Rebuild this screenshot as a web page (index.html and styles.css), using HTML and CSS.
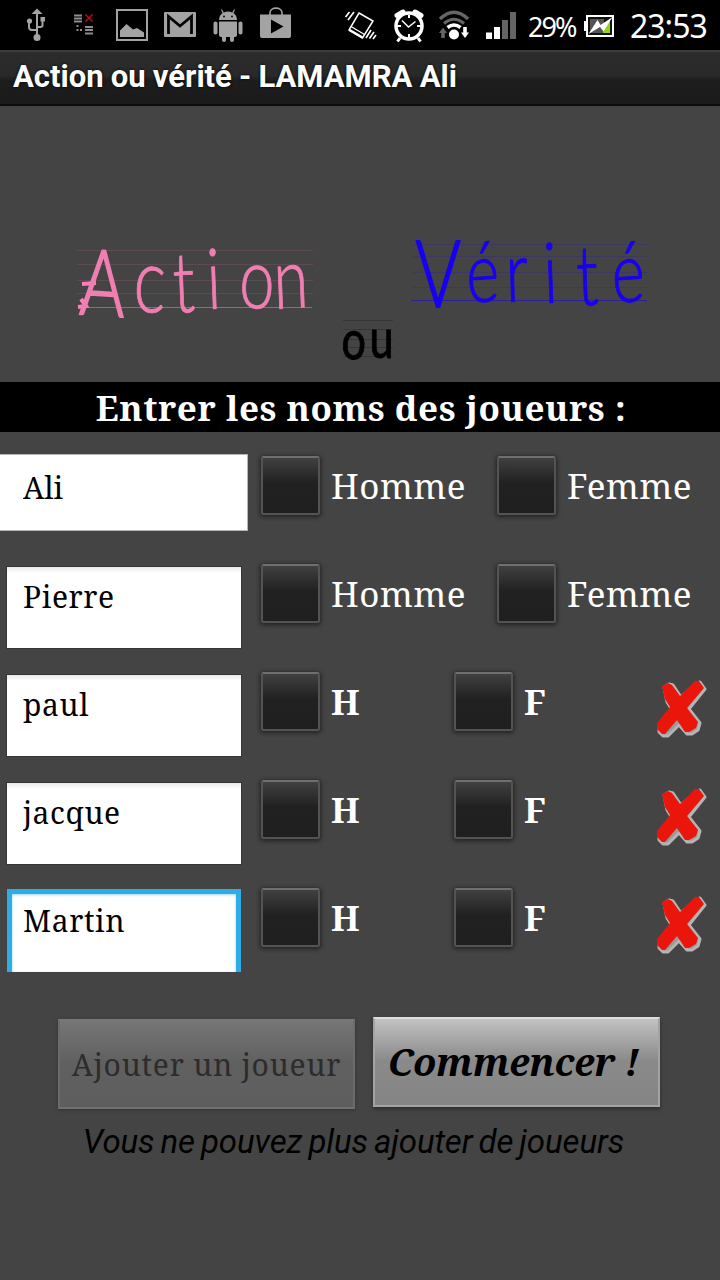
FILE: index.html
```
<!DOCTYPE html>
<html lang="fr">
<head>
  <meta charset="UTF-8" />
  <meta name="viewport" content="width=device-width, initial-scale=1.0"/>
  <title>Action ou vérité</title>
  <link rel="stylesheet" href="styles.css">
</head>
<body>

  <div class="status-bar">
    <!-- usb -->
    <svg width="44" height="50" viewBox="16 0 44 50" fill="none" stroke="#a3a3a3" stroke-width="2">
      <path d="M37 12V37M29 22v5q0 3 3 3h5M42.500 21v4q0 2-2 2H37"/>
      <path d="M31.500 14 37 8.500l5.500 5.500z" fill="#a3a3a3" stroke="none"/>
      <circle cx="37" cy="37.500" r="3.500" fill="#a3a3a3" stroke="none"/>
      <circle cx="29.500" cy="21" r="2.600" fill="#a3a3a3" stroke="none"/>
      <path d="M40.500 17h4.500v4.500h-4.500z" fill="#a3a3a3" stroke="none"/>
    </svg>
    <!-- sync error -->
    <svg width="46" height="50" viewBox="60 0 46 50" fill="none" stroke="#8d8d8d" stroke-width="2">
      <path d="M74 15.500h8M74 18.500h8M74 21.500h8M85 27h8M85 30h8M85 33.500h8M76.500 26h2M76.500 30h2M80 30h2"/>
      <path d="M85.500 14.500l7 7M92.500 14.500l-7 7" stroke="#b50f12" stroke-width="1.600"/>
    </svg>
    <!-- picture -->
    <svg width="50" height="50" viewBox="106 0 50 50">
      <rect x="117" y="10" width="30" height="30" fill="none" stroke="#a3a3a3" stroke-width="2"/>
      <path d="M120 37v-6.500l6.500-6.500 6.500 5.500 4-1.500 7 4.500V37z" fill="#a3a3a3"/>
    </svg>
    <!-- mail -->
    <svg width="49" height="50" viewBox="156 0 49 50">
      <rect x="164" y="12" width="32" height="25" rx="1" fill="#a3a3a3"/>
      <path d="M168.500 34V16.500L180 26l11.500-9.500V34" fill="none" stroke="#050505" stroke-width="2.800"/>
    </svg>
    <!-- android -->
    <svg width="46" height="50" viewBox="205 0 46 50" fill="#a3a3a3">
      <path d="M219 20c0-5 4-8.500 9-8.500s9 3.500 9 8.500z"/>
      <path d="M221.500 9.500l2 4M234.500 9.500l-2 4" stroke="#a3a3a3" stroke-width="1.200"/>
      <circle cx="224" cy="16.500" r=".9" fill="#000"/>
      <circle cx="232" cy="16.500" r=".9" fill="#000"/>
      <path d="M219 21.500h18V35q0 2-2 2h-14q-2 0-2-2z"/>
      <rect x="213.500" y="21.500" width="4" height="13" rx="2"/>
      <rect x="238.500" y="21.500" width="4" height="13" rx="2"/>
      <rect x="222" y="33" width="4" height="9" rx="2"/>
      <rect x="230" y="33" width="4" height="9" rx="2"/>
    </svg>
    <!-- play store -->
    <svg width="54" height="50" viewBox="251 0 54 50">
      <path d="M270 15v-2c0-6.500 12-6.500 12 0v2" fill="none" stroke="#a3a3a3" stroke-width="1.600"/>
      <path d="M260 14.500h31V36q0 2-2 2h-27q-2 0-2-2z" fill="#a3a3a3"/>
      <path d="M271 19.500l12.500 7L271 33.500z" fill="#000"/>
    </svg>
    <div class="spacer"></div>
    <!-- vibrate -->
    <svg width="48" height="50" viewBox="337 0 48 50" fill="none" stroke="#fff">
      <path d="M359 13l14 8-10.500 17-13.500-8z" stroke-width="1.500"/>
      <path d="M351 26.500l13.500 8" stroke-width="1.200"/>
      <path d="M349.500 30l13 7.500" stroke-width="2.500"/>
      <path d="M345.500 17l4-5M348 20l6-8M366 38l5-8M369.500 38.500l4.500-6.500M373 39l3-4" stroke-width="1.600"/>
    </svg>
    <!-- alarm -->
    <svg width="47" height="50" viewBox="385 0 47 50" fill="none" stroke="#fff">
      <circle cx="409" cy="26" r="13" stroke-width="3.500"/>
      <path d="M402 20.500l6.500 6.500 7-5.500" stroke-width="1.500"/>
      <path d="M409 15v3M409 34v4M397 26h4M417 26h4" stroke-width="2"/>
      <path d="M397 15.500l6-3.500M415 12l6 3.500" stroke-width="5" stroke-linecap="round"/>
      <path d="M400 38l-2.500 3.500M418 38l2.500 3.500" stroke-width="3"/>
    </svg>
    <!-- wifi -->
    <svg width="46" height="50" viewBox="432 0 46 50" fill="none">
      <path d="M440 19q14-13.500 28 0" stroke="#656565" stroke-width="3.500"/>
      <path d="M444 23.500q10-8.500 20 0" stroke="#656565" stroke-width="3"/>
      <path d="M447.500 27.500q6.500-5 13 0" stroke="#fff" stroke-width="3.500"/>
      <circle cx="454" cy="34.500" r="5" fill="#fff"/>
      <path d="M443 27.500l4 5.500h-2.200v5h-3.600v-5H439z" fill="#656565"/>
      <path d="M465 38l-4-5.500h2.200v-5.500h3.600v5.500h2.200z" fill="#fff"/>
    </svg>
    <!-- signal -->
    <svg width="50" height="50" viewBox="478 0 50 50">
      <path d="M486 32.500h6V39h-6zM494 27h6v12h-6z" fill="#fff"/>
      <path d="M502 20h6v19h-6zM510 12h6v27h-6z" fill="#656565"/>
    </svg>
    <span class="battery-level">29%</span>
    <!-- battery -->
    <svg width="54" height="50" viewBox="576 0 54 50">
      <rect x="587" y="16" width="26" height="20" fill="#111" stroke="#fff" stroke-width="2"/>
      <path d="M584 21h3v10h-3z" fill="#fff"/>
      <path d="M590 19h14v14h-14z" fill="#555"/>
      <path d="M604 24l6-4v13h-7z" fill="#93d51a"/>
      <path d="M588.500 34l9-14 3 5 12-8-9 14.500-3.500-4.500z" fill="#fff"/>
    </svg>
    <span class="clock">23:53</span>
  </div>

  <header class="title-bar"><span>Action ou vérité - LAMAMRA Ali</span></header>

  <!-- ruled lines with the words written on them -->
  <svg class="logo" width="720" height="276" viewBox="0 106 720 276">
    <g stroke="#ff7eb9" stroke-width="1">
      <path d="M77 250.500h236M77 264.500h236M77 280.500h236M77 293.500h236" opacity=".13"/>
      <path d="M78 307.500h234" opacity=".5"/>
      <path d="M78 307l8-1-5-7M82 284l14-1" stroke-width="4" fill="none"/>
    </g>
    <g stroke="#1800f0" stroke-width="1">
      <path d="M413 244.500h236M413 256.500h236M413 272.500h236M413 287.500h236" opacity=".15"/>
      <path d="M411 300.500h236" opacity=".5"/>
    </g>
    <path d="M343 320.500h50M343 329.500h50M343 339.500h50M343 347.500h50M343 356.500h50" stroke="#000" opacity=".2"/>
    <text class="word pink" transform="scale(.75 1)" x="105 177 232 277 318 366" y="314 311 313 309 307 309" rotate="3 3 -3 -3 3 -3"><tspan class="cap">A</tspan><tspan class="wide">c</tspan>tion</text>
    <text class="word blue" transform="scale(.75 1)" x="554 623 675 726 770 817" y="307 303 302 303 306 303" rotate="0 -3 -2 -3 -3 -3"><tspan class="cap">V</tspan>érité</text>
    <text class="word small" transform="scale(.8 1)" x="426 462" y="358" rotate="4 0">ou</text>
  </svg>

  <h3 class="heading"><span>Entrer les noms des joueurs :</span></h3>

  <div class="players">
    <div class="player">
      <input type="text" class="name first" value="Ali">
      <label class="choice"><input type="checkbox"><span>Homme</span></label>
      <label class="choice"><input type="checkbox"><span>Femme</span></label>
    </div>
    <div class="player">
      <input type="text" class="name" value="Pierre">
      <label class="choice"><input type="checkbox"><span>Homme</span></label>
      <label class="choice"><input type="checkbox"><span>Femme</span></label>
    </div>
    <div class="player extra">
      <input type="text" class="name" value="paul">
      <label class="choice"><input type="checkbox"><span>H</span></label>
      <label class="choice"><input type="checkbox"><span>F</span></label>
      <svg class="remove" width="52" height="60" viewBox="0 0 52 60"><use href="#cross"/></svg>
    </div>
    <div class="player extra">
      <input type="text" class="name" value="jacque">
      <label class="choice"><input type="checkbox"><span>H</span></label>
      <label class="choice"><input type="checkbox"><span>F</span></label>
      <svg class="remove" width="52" height="60" viewBox="0 0 52 60"><use href="#cross"/></svg>
    </div>
    <div class="player extra">
      <input type="text" class="name active" value="Martin">
      <label class="choice"><input type="checkbox"><span>H</span></label>
      <label class="choice"><input type="checkbox"><span>F</span></label>
      <svg class="remove" width="52" height="60" viewBox="0 0 52 60">
        <g id="cross" stroke-linejoin="round">
          <path d="M8 8l5-3 4 1 8 12L41 4l3-1 5 7-16 20 11 14-2 7-6 4h-5l-8-9-11 11H7l-4-4v-5l13-17-5-8z" fill="#9a9a9a" stroke="#b4b4b4" stroke-width="3"/>
          <path d="M6 7l6-3 4 2 8 11L39 2h4l5 7L31 29l11 14-2 6-7 4h-4l-8-12-12 14H6l-5-5v-6l13-16-5-8z" fill="#ea160c"/>
        </g>
      </svg>
    </div>
  </div>

  <div class="actions">
    <button class="add-btn" disabled><span>Ajouter un joueur</span></button>
    <button class="start-btn"><span>Commencer !</span></button>
  </div>
  <p class="note"><span>Vous ne pouvez plus ajouter de joueurs</span></p>

</body>
</html>
```
FILE: styles.css
```
* {
  box-sizing: border-box;
}
body {
  margin: 0;
  width: 720px;
  height: 1280px;
  overflow: hidden;
  background: #444;
  color: white;
  font-family: "Droid Serif", "Noto Serif", "DejaVu Serif Condensed", "DejaVu Serif", serif;
}
svg {
  display: block;
  flex: none;
}
.status-bar {
  display: flex;
  height: 50px;
  padding-left: 16px;
  background: #000;
  font-family: "Noto Sans", sans-serif;
  line-height: 51px;
}
.spacer {
  width: 32px;
}
.battery-level {
  width: 48px;
  font-size: 27px;
  letter-spacing: -2px;
  line-height: 53px;
  white-space: nowrap;
}
.clock {
  font-size: 32px;
  letter-spacing: -1px;
}
.title-bar {
  height: 56px;
  padding-left: 13px;
  border-top: 2px solid #3c3c3c;
  border-bottom: 2px solid #0c0c0c;
  background: linear-gradient(#2c2c2c, #292929 45%, #1d1d1d 55%, #1b1b1b);
  font: bold 31px/50px Roboto, sans-serif;
  letter-spacing: 0;
  word-spacing: -0.5px;
  white-space: nowrap;
  text-shadow: 0 0 3px #000;
}
.word {
  font-family: Lato, sans-serif;
  font-size: 84px;
  font-weight: 300;
  stroke-width: 1px;
}
.cap {
  font-size: 92px;
  stroke-width: 2px;
}
.wide {
  font-size: 90px;
}
.pink {
  fill: #f07fb1;
  stroke: #f07fb1;
}
.blue {
  fill: #1800f0;
  stroke: #1800f0;
}
.small {
  fill: #000;
  stroke: #000;
  font-size: 54px;
  font-weight: 400;
}
.heading {
  height: 50px;
  margin: 0;
  background: #000;
  font-size: 35px;
  letter-spacing: 0.58px;
  line-height: 52px;
  text-align: center;
  white-space: nowrap;
  padding-left: 2px;
}
.player {
  display: grid;
  grid-template-columns: 261px 236px 223px;
  align-items: start;
  height: 108px;
  padding-top: 24px;
}
.player.extra {
  grid-template-columns: 261px 193px 202px 64px;
}
.name {
  width: 234px;
  height: 81px;
  margin: 3px 0 0 7px;
  padding: 0 16px 23px;
  border: 0;
  outline: 1px solid #363636;
  background: linear-gradient(#e9e9e9, #fff 6px);
  color: #000;
  font: 30px "Droid Serif", "Noto Serif", "DejaVu Serif Condensed", "DejaVu Serif", serif;
  letter-spacing: 0.6px;
}
.name.first {
  width: 248px;
  height: 77px;
  margin: -2px 0 0;
  padding: 0 23px 10px;
  border: 1px solid #b5b5b5;
  border-left: 0;
  outline: 0;
  background: #fff;
  letter-spacing: 0;
}
.name.active {
  height: 83px;
  margin-top: 1px;
  padding: 0 11px 25px;
  border: 5px solid #2eace5;
  border-bottom: 0;
  outline: 0;
  background: #fff;
  box-shadow: inset 0 1px 3px #9ed8f2;
}
.choice {
  display: flex;
  gap: 11px;
  font-size: 35px;
  letter-spacing: 0.4px;
  line-height: 60px;
}
.choice input {
  appearance: none;
  flex: none;
  width: 59px;
  height: 59px;
  margin: 0;
  border: 2px solid #535353;
  border-top-color: #6f6f6f;
  border-radius: 3px;
  background: linear-gradient(#404040, #212121 45%, #1f1f1f);
  box-shadow: 0 1px 4px 1px #222;
}
.extra .choice {
  font-weight: bold;
}
.remove {
  margin-top: 7px;
}
.actions {
  display: flex;
  align-items: flex-start;
  gap: 18px;
  padding: 45px 0 0 58px;
}
.actions button {
  height: 90px;
  padding: 0;
  border: 2px solid #a3a3a3;
  font-family: inherit;
  white-space: nowrap;
  box-shadow: 0 2px 4px #2b2b2b;
}
.actions .add-btn {
  width: 297px;
  margin-top: 2px;
  border-color: #777 #6b6b6b #707070;
  background: linear-gradient(#767676, #606060 48%, #5e5e5e);
  color: #2c2c2c;
  font-size: 30px;
  letter-spacing: 0.8px;
  box-shadow: 0 1px 3px #333;
}
.actions .start-btn {
  width: 287px;
  padding: 0 6px 3px 0;
  border-top-color: #dedede;
  background: linear-gradient(#c2c2c2, #8a8a8a 48%, #858585);
  color: #000;
  font-size: 38px;
  font-weight: bold;
  font-style: italic;
  letter-spacing: -0.3px;
}
.note {
  margin: 13px 0 0;
  padding-right: 13px;
  color: #000;
  font: italic 33px/40px Roboto, sans-serif;
  letter-spacing: -0.1px;
  word-spacing: -2px;
  text-align: center;
  white-space: nowrap;
}
```
